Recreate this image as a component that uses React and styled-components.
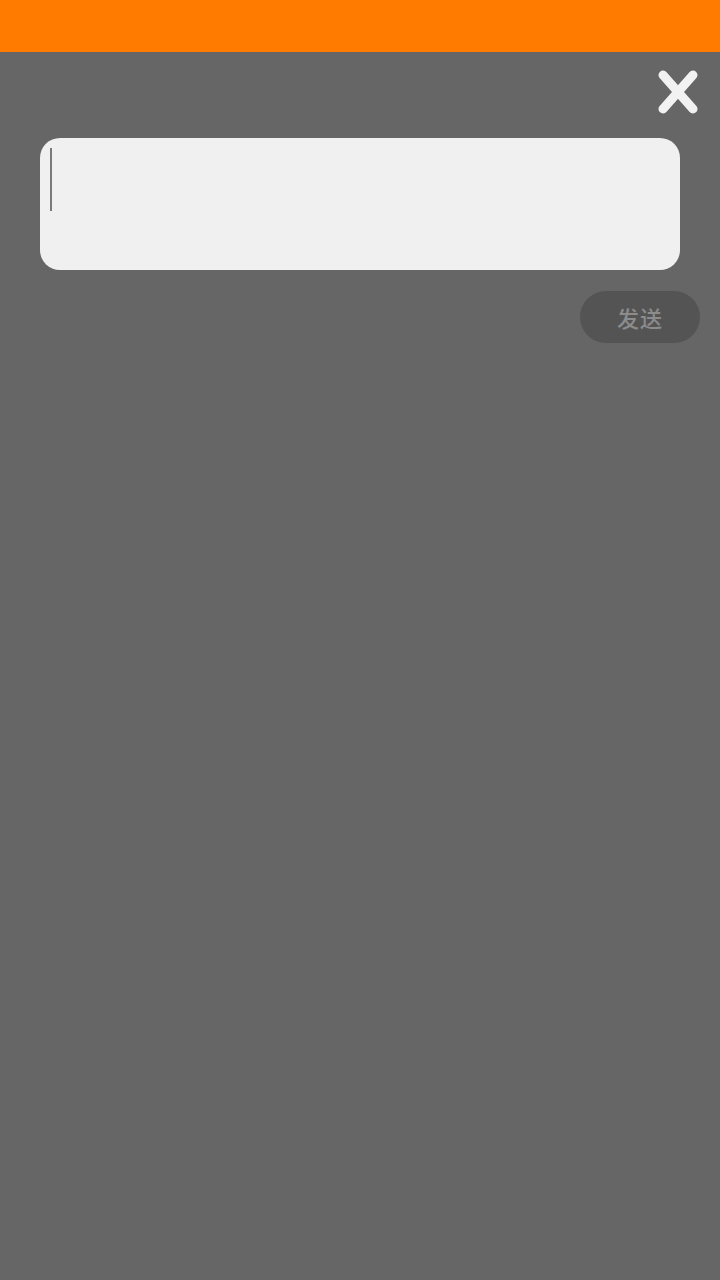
import React, { useState } from "react";
import styled, { createGlobalStyle } from "styled-components";

const GlobalStyle = createGlobalStyle`
  html, body {
    margin: 0;
    padding: 0;
    background: #666666;
    font-family: "Noto Sans CJK SC", "Noto Sans", sans-serif;
  }
`;

const Page = styled.div`
  min-height: 1280px;
  background: #666666;
  display: flex;
  flex-direction: column;
`;

const TopBar = styled.div`
  height: 52px;
  background: #ff7b00;
`;

const CloseRow = styled.div`
  display: flex;
  justify-content: flex-end;
  align-items: flex-start;
  padding: 17px 21px 0 0;
  height: 86px;
  box-sizing: border-box;
`;

const CloseButton = styled.button`
  width: 42px;
  height: 46px;
  padding: 0;
  border: none;
  background: none;
  cursor: pointer;
`;

const Editor = styled.div`
  margin: 0 40px;
  height: 132px;
  background: #f0f0f0;
  border-radius: 20px;
  padding: 10px;
  box-sizing: border-box;
  display: flex;
`;

const Caret = styled.div`
  width: 2px;
  height: 63px;
  background: #7a7a7a;
`;

const Actions = styled.div`
  display: flex;
  justify-content: flex-end;
  padding: 21px 20px 0 0;
`;

const SendButton = styled.button`
  width: 120px;
  height: 52px;
  border: none;
  border-radius: 26px;
  background: #545454;
  color: #8c8c8c;
  font-family: "Noto Sans CJK SC", sans-serif;
  font-size: 22px;
  font-weight: 500;
  letter-spacing: 1px;
  padding: 0;
  cursor: pointer;
`;

const CloseIcon = () => (
  <svg width="42" height="46" viewBox="0 0 42 46">
    <g stroke="#f2f2f2" strokeWidth="9" strokeLinecap="round">
      <line x1="6" y1="6" x2="36" y2="40" />
      <line x1="36" y1="6" x2="6" y2="40" />
    </g>
  </svg>
);

export default function App() {
  const [text] = useState("");
  return (
    <Page>
      <GlobalStyle />
      <TopBar />
      <CloseRow>
        <CloseButton aria-label="close">
          <CloseIcon />
        </CloseButton>
      </CloseRow>
      <Editor>
        {text}
        <Caret />
      </Editor>
      <Actions>
        <SendButton>发送</SendButton>
      </Actions>
    </Page>
  );
}
